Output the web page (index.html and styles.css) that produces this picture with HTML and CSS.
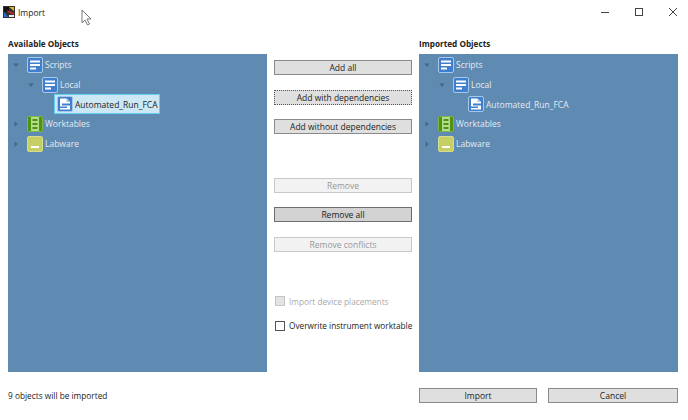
FILE: index.html
```html
<!DOCTYPE html>
<html lang="en">
<head>
<meta charset="UTF-8">
<title>Import</title>
<link rel="stylesheet" href="styles.css">
</head>
<body>
<svg class="defs" width="0" height="0">
    <symbol id="ico-script" viewBox="0 0 16 16">
        <rect x="0.5" y="0.5" width="15" height="15" rx="1.5" fill="#3f7fcf" stroke="#a9c8e8"/>
        <rect x="3" y="3.5" width="10" height="2" fill="#fff"/>
        <rect x="3" y="7" width="10" height="2" fill="#fff"/>
        <rect x="3" y="10.5" width="6" height="2" fill="#fff"/>
    </symbol>
    <symbol id="ico-file" viewBox="0 0 16 16">
        <rect x="0.5" y="0.5" width="15" height="15" rx="1.5" fill="#3f7fcf" stroke="#a9c8e8"/>
        <path d="M3 2.5h6.5l3.5 3.5v7.5H3z" fill="#fff"/>
        <path d="M9.5 2.5V6H13" fill="#a9c8e8"/>
        <rect x="5" y="7.5" width="8" height="2" fill="#3f7fcf"/>
        <rect x="3" y="10.5" width="7" height="1.5" fill="#3f7fcf"/>
    </symbol>
    <symbol id="ico-worktable" viewBox="0 0 16 16">
        <rect x="0.5" y="0.5" width="15" height="15" rx="1" fill="#4f9410" stroke="#7fb54a"/>
        <rect x="4" y="1" width="8" height="14" fill="#b5d98d"/>
        <rect x="5.5" y="3" width="5" height="2" fill="#4f9410"/>
        <rect x="5.5" y="7" width="5" height="2" fill="#4f9410"/>
        <rect x="5.5" y="11" width="5" height="2" fill="#4f9410"/>
    </symbol>
    <symbol id="ico-labware" viewBox="0 0 16 16">
        <rect x="0.5" y="0.5" width="15" height="15" rx="1.5" fill="#c6cf63" stroke="#d6dc8e"/>
        <rect x="4" y="10" width="8" height="2" fill="#fff"/>
    </symbol>
    <symbol id="arrow-open" viewBox="0 0 8 8"><path d="M0.5 2h7L4 6.5z" fill="#4a6580"/></symbol>
    <symbol id="arrow-closed" viewBox="0 0 8 8"><path d="M2 0.5v7L6.5 4z" fill="#4a6580"/></symbol>
</svg>

<div class="window">
    <div class="titlebar">
        <svg class="app-icon" width="12" height="12" viewBox="0 0 12 12">
            <rect width="12" height="12" fill="#333"/>
            <rect x="1" y="1" width="5" height="5" fill="#111"/>
            <path d="M6 1h5v4z" fill="#e8b020"/>
            <path d="M1 6l4 5H1z" fill="#2a6fd0"/>
            <path d="M3 4l8 3v2L5 6z" fill="#d8262c"/>
            <path d="M6 9h5v2H6z" fill="#eee"/>
        </svg>
        <span class="title">Import</span>
        <div class="win-buttons">
            <svg width="10" height="10" viewBox="0 0 10 10"><path d="M1 5.5h8" stroke="#444" fill="none"/></svg>
            <svg width="10" height="10" viewBox="0 0 10 10"><rect x="1.5" y="1.5" width="7" height="7" stroke="#444" fill="none"/></svg>
            <svg width="10" height="10" viewBox="0 0 10 10"><path d="M1 1l8 8M9 1l-8 8" stroke="#444" fill="none"/></svg>
        </div>
    </div>

    <div class="main">
        <div class="column">
            <div class="heading">Available Objects</div>
            <div class="tree">
                <div class="row"><svg class="arrow"><use href="#arrow-open"/></svg><svg class="ico"><use href="#ico-script"/></svg><span class="label">Scripts</span></div>
                <div class="row depth1"><svg class="arrow"><use href="#arrow-open"/></svg><svg class="ico"><use href="#ico-script"/></svg><span class="label">Local</span></div>
                <div class="row depth2 selected"><svg class="ico"><use href="#ico-file"/></svg><span class="label">Automated_Run_FCA</span></div>
                <div class="row"><svg class="arrow"><use href="#arrow-closed"/></svg><svg class="ico"><use href="#ico-worktable"/></svg><span class="label">Worktables</span></div>
                <div class="row"><svg class="arrow"><use href="#arrow-closed"/></svg><svg class="ico"><use href="#ico-labware"/></svg><span class="label">Labware</span></div>
            </div>
        </div>

        <div class="actions">
            <button class="btn">Add all</button>
            <button class="btn focused">Add with dependencies</button>
            <button class="btn">Add without dependencies</button>
            <button class="btn disabled gap-top">Remove</button>
            <button class="btn dark">Remove all</button>
            <button class="btn disabled">Remove conflicts</button>
            <div class="check off gap-check"><span class="box"></span>Import device placements</div>
            <div class="check"><span class="box"></span>Overwrite instrument worktable</div>
        </div>

        <div class="column">
            <div class="heading">Imported Objects</div>
            <div class="tree">
                <div class="row"><svg class="arrow"><use href="#arrow-open"/></svg><svg class="ico"><use href="#ico-script"/></svg><span class="label">Scripts</span></div>
                <div class="row depth1"><svg class="arrow"><use href="#arrow-open"/></svg><svg class="ico"><use href="#ico-script"/></svg><span class="label">Local</span></div>
                <div class="row depth2"><svg class="ico"><use href="#ico-file"/></svg><span class="label">Automated_Run_FCA</span></div>
                <div class="row"><svg class="arrow"><use href="#arrow-closed"/></svg><svg class="ico"><use href="#ico-worktable"/></svg><span class="label">Worktables</span></div>
                <div class="row"><svg class="arrow"><use href="#arrow-closed"/></svg><svg class="ico"><use href="#ico-labware"/></svg><span class="label">Labware</span></div>
            </div>
        </div>
    </div>

    <div class="footer">
        <span class="status">9 objects will be imported</span>
        <div class="footer-buttons">
            <button class="btn import">Import</button>
            <button class="btn cancel">Cancel</button>
        </div>
    </div>
</div>

<!-- mouse pointer caught in the screenshot -->
<svg class="cursor" width="12" height="18" viewBox="0 0 12 18">
    <path d="M1 1v13l3-3 2.5 5 2-1-2.5-5h4z" fill="#fff" stroke="#777"/>
</svg>
</body>
</html>
```

FILE: styles.css
```css
body {
    margin: 0;
    width: 688px;
    height: 420px;
    overflow: hidden;
    background-color: white;
    color: #222;
    font-family: "Open Sans", sans-serif;
    font-size: 8.5px;
    position: relative;
}
.defs {
    display: none;
}
.window {
    display: flex;
    flex-direction: column;
    height: 100%;
    padding: 0 10px 0 8px;
    box-sizing: border-box;
}
.titlebar {
    display: flex;
    align-items: center;
    height: 24px;
    gap: 3px;
    margin-left: -5px;
}
.title {
    font-size: 8.5px;
}
.win-buttons {
    margin-left: auto;
    margin-bottom: 1px;
    display: flex;
    gap: 24px;
}
.main {
    display: grid;
    grid-template-columns: 259px 138px 259px;
    column-gap: 7px;
    height: 348px;
}
.column {
    display: flex;
    flex-direction: column;
}
.heading {
    height: 30px;
    line-height: 40px;
    font-weight: 700;
    font-size: 8.2px;
}
.tree {
    flex: 1;
    background-color: #5f8ab2;
    padding-top: 1px;
}
.row {
    display: flex;
    align-items: center;
    height: 19.7px;
    padding-left: 5px;
    color: #e4ebf2;
}
.row.depth1 {
    padding-left: 20px;
}
.row.depth2 {
    padding-left: 49px;
}
.arrow {
    width: 6px;
    height: 6px;
    margin-right: 8px;
    flex: none;
}
.ico {
    width: 16px;
    height: 16px;
    flex: none;
}
.label {
    margin-left: 2px;
    white-space: nowrap;
}
.row.selected {
    margin-left: 46px;
    padding-left: 2px;
    width: 106px;
    box-sizing: border-box;
    background-color: #cde8f5;
    border: 1px solid #62d0ee;
    color: #222;
}
.actions {
    display: flex;
    flex-direction: column;
    padding-top: 36px;
    gap: 14.5px;
}
.btn {
    height: 15px;
    padding: 1px 0 0;
    border: 1px solid #8a8a8a;
    border-radius: 0;
    background-color: #dfdfdf;
    color: #222;
    font-family: inherit;
    font-size: 8.5px;
    line-height: 12px;
}
.btn.focused {
    border: 1px dotted #555;
}
.btn.dark {
    background-color: #d2d2d2;
    border-color: #6e6e6e;
}
.btn.disabled {
    background-color: #f2f2f2;
    border-color: #c8c8c8;
    color: #999;
}
.gap-top {
    margin-top: 29px;
}
.check {
    display: flex;
    align-items: center;
    gap: 4px;
    height: 10px;
    margin-left: 1px;
    white-space: nowrap;
    font-size: 8.25px;
}
.box {
    width: 8px;
    height: 8px;
    border: 1px solid #555;
    background-color: white;
    flex: none;
}
.check.off {
    color: #aaa;
}
.check.off .box {
    border-color: #c4c4c4;
    background-color: #e4e4e4;
}
.gap-check {
    margin-top: 30px;
}
.footer {
    display: flex;
    align-items: center;
    justify-content: space-between;
    height: 14px;
    margin-top: 16px;
}
.status {
    font-size: 8.3px;
}
.footer-buttons {
    display: flex;
    gap: 11px;
}
.import {
    width: 118px;
}
.cancel {
    width: 130px;
}
.cursor {
    position: absolute;
    left: 81px;
    top: 9px;
}
```
